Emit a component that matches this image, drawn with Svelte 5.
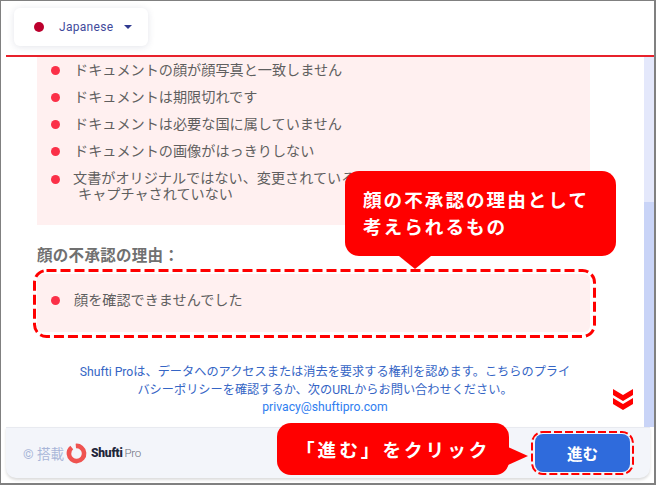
<script lang="ts">
	const docReasons = [
		'ドキュメントの顔が顔写真と一致しません',
		'ドキュメントは期限切れです',
		'ドキュメントは必要な国に属していません',
		'ドキュメントの画像がはっきりしない'
	];
</script>

<div class="frame">
	<div class="card">
		<header class="top">
			<div class="lang">
				<span class="flag"></span>
				<span class="lang-name">Japanese</span>
				<span class="caret"></span>
			</div>
		</header>

		<div class="middle">
			<main class="content">
				<ul class="reasons">
					{#each docReasons as reason}
						<li>{reason}</li>
					{/each}
					<li class="long">文書がオリジナルではない、変更されている、または画面から<br /><span class="indent">キャプチャされていない</span></li>
				</ul>

				<h2>顔の不承認の理由：</h2>
				<div class="face-box">
					<ul class="face">
						<li>顔を確認できませんでした</li>
					</ul>
					<svg class="dashes" width="563" height="69" viewBox="0 0 563 69">
						<rect x="1.5" y="1.5" width="560" height="66" rx="12" fill="none" stroke="#f00" stroke-width="3" stroke-dasharray="10 4" />
					</svg>
				</div>

				<p class="privacy">
					Shufti Proは、データへのアクセスまたは消去を要求する権利を認めます。こちらのプライ<br />
					バシーポリシーを確認するか、次のURLからお問い合わせください。<br />
					<span class="mail">privacy@shuftipro.com</span>
				</p>

				<svg class="chevrons" width="22" height="22" viewBox="0 0 22 22">
					<path d="M1 1 L11 7 L21 1 V7 L11 13 L1 7 Z M1 10 L11 16 L21 10 V16 L11 22 L1 16 Z" fill="#f00" />
				</svg>
			</main>
			<div class="scrollbar"><div class="thumb"></div></div>
		</div>

		<footer class="bottom">
			<div class="powered">
				<span class="copy">© 搭載</span>
				<svg class="ring" width="21" height="21" viewBox="0 0 21 21">
					<circle cx="10.5" cy="10.5" r="7.6" fill="none" stroke="#ef5350" stroke-width="4.6" stroke-dasharray="43 5" transform="rotate(-95 10.5 10.5)" />
				</svg>
				<span class="brand"><b>Shufti</b><i>Pro</i></span>
			</div>
			<div class="next-wrap">
				<button class="next">進む</button>
				<svg class="dashes" width="103" height="44" viewBox="0 0 103 44">
					<rect x="1" y="1" width="101" height="42" rx="11" fill="none" stroke="#f00" stroke-width="2" stroke-dasharray="8 3" />
				</svg>
			</div>
		</footer>
	</div>

	<div class="callout callout-face">
		顔の不承認の理由として<br />考えられるもの
		<span class="tail-down"></span>
	</div>
	<div class="callout callout-next">
		「進む」をクリック
		<span class="tail-right"></span>
	</div>
</div>

<style>
	:global(body) {
		margin: 0;
		background: #fff;
	}

	.frame {
		position: relative;
		width: 656px;
		height: 485px;
		box-sizing: border-box;
		border: 1px solid #808080;
		border-width: 1px 2px 2px 1px;
		padding: 0 0 5px 5px;
		overflow: hidden;
		background: #fff;
		font-family: Roboto, "Noto Sans CJK JP", sans-serif;
	}

	.card {
		height: 100%;
		display: flex;
		flex-direction: column;
	}

	.top {
		height: 56px;
		flex: none;
		box-sizing: border-box;
		border-bottom: 2px solid #e8212b;
		padding: 7px 0 0 8px;
	}

	.lang {
		width: 134px;
		height: 38px;
		display: flex;
		align-items: center;
		box-sizing: border-box;
		padding-left: 20px;
		border-radius: 6px;
		background: #fff;
		box-shadow: 0 1px 7px rgba(40, 50, 90, 0.13);
	}

	.flag {
		width: 10px;
		height: 10px;
		border-radius: 50%;
		background: #bc002d;
	}

	.lang-name {
		margin-left: 15px;
		font-size: 12px;
		letter-spacing: 0.3px;
		color: #3f4a9c;
	}

	.caret {
		margin-left: 11px;
		border: 4px solid transparent;
		border-top: 4px solid #2f3a8f;
		border-bottom: 0;
	}

	.middle {
		flex: 1;
		min-height: 0;
		display: flex;
	}

	.content {
		position: relative;
		flex: 1;
		min-width: 0;
		padding-left: 31px;
	}

	ul {
		list-style: none;
		margin: 0;
	}

	.reasons {
		width: 553px;
		height: 168px;
		box-sizing: border-box;
		padding: 3px 0 0 14px;
		background: #fff0f0;
	}

	li {
		position: relative;
		padding-left: 23px;
		font-size: 14.15px;
		line-height: 21px;
		height: 21px;
		margin-bottom: 6px;
		color: #5f5f5f;
		white-space: nowrap;
	}

	li::before {
		content: '';
		position: absolute;
		left: 0;
		top: 6px;
		width: 9px;
		height: 9px;
		border-radius: 50%;
		background: #fb3048;
	}

	.reasons .long {
		line-height: 16px;
		padding-top: 2px;
		padding-left: 22px;
		height: 32px;
	}

	.reasons .long::before {
		top: 7px;
	}

	.indent {
		margin-left: 5px;
	}

	h2 {
		margin: 21px 0 0;
		font-size: 15.5px;
		line-height: 20px;
		font-weight: 700;
		color: #707070;
		letter-spacing: 0.3px;
	}

	.face-box {
		position: relative;
		width: 563px;
		height: 69px;
		margin: 3px 0 0 -4px;
		box-sizing: border-box;
		padding: 5px 6px 6px 4px;
	}

	.dashes {
		position: absolute;
		left: 0;
		top: 0;
		pointer-events: none;
	}

	.face {
		height: 100%;
		box-sizing: border-box;
		padding: 16px 0 0 14px;
		background: #fff0f0;
		border-radius: 6px;
	}

	.face li {
		margin: 0;
	}

	.privacy {
		width: 500px;
		margin: 26px 0 0 38px;
		font-size: 12.2px;
		line-height: 17.5px;
		text-align: center;
		color: #3565c5;
		white-space: nowrap;
	}

	.mail {
		color: #2f7ef0;
	}

	.chevrons {
		position: absolute;
		right: 10px;
		top: 331px;
	}

	.scrollbar {
		width: 10px;
		flex: none;
		background: #e4e8fb;
		padding-top: 145px;
		box-sizing: border-box;
	}

	.thumb {
		height: 100%;
		background: #c9d4f7;
	}

	.bottom {
		height: 51px;
		flex: none;
		display: flex;
		align-items: center;
		justify-content: space-between;
		box-sizing: border-box;
		margin-right: 4px;
		padding: 0 16px 0 17px;
		background: #f3f5fa;
		border-top: 1px solid #e8eaf0;
		border-radius: 0 0 10px 10px;
		box-shadow: 0 2px 3px rgba(0, 0, 0, 0.14);
	}

	.powered {
		display: flex;
		align-items: center;
		gap: 4px;
	}

	.copy {
		font-size: 13.5px;
		color: #a9b6d8;
	}

	.ring {
		margin-left: -2px;
	}

	.brand {
		font-size: 12px;
		color: #6b6f7a;
		letter-spacing: -0.2px;
	}

	.brand b {
		color: #22263a;
		font-weight: 900;
	}

	.brand i {
		margin-left: 2px;
		font-size: 11.5px;
		font-style: normal;
		font-weight: 300;
		letter-spacing: -0.4px;
	}

	.next-wrap {
		position: relative;
		width: 103px;
		height: 44px;
		box-sizing: border-box;
		padding: 3px 4px;
	}

	.next {
		display: block;
		width: 100%;
		height: 100%;
		padding: 0;
		border: 0;
		border-radius: 8px;
		background: #2f6bdc;
		color: #fff;
		font-family: inherit;
		font-size: 15.5px;
		font-weight: 700;
	}

	.callout {
		position: absolute;
		box-sizing: border-box;
		background: #f00;
		color: #fff;
		font-weight: 700;
		font-size: 18.6px;
		letter-spacing: 2px;
		white-space: nowrap;
		border-radius: 14px;
		font-family: "Noto Sans CJK JP", sans-serif;
	}

	.callout-face {
		left: 344px;
		top: 170px;
		width: 271px;
		height: 85px;
		padding: 14px 0 0 18px;
		line-height: 27px;
	}

	.tail-down {
		position: absolute;
		left: 54px;
		top: 85px;
		border-style: solid;
		border-width: 13px 16px 0;
		border-color: #f00 transparent transparent;
	}

	.callout-next {
		left: 276px;
		top: 422px;
		width: 232px;
		height: 52px;
		line-height: 52px;
		padding-left: 19px;
		letter-spacing: 3px;
	}

	.tail-right {
		position: absolute;
		left: 231px;
		top: 24px;
		border-style: solid;
		border-width: 9px 0 9px 20px;
		border-color: transparent transparent transparent #f00;
	}
</style>
